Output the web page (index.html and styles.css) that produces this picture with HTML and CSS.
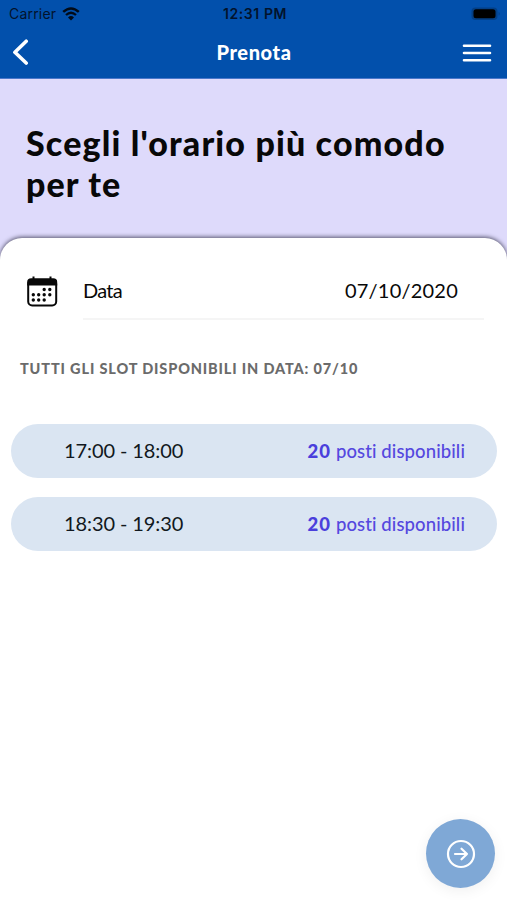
FILE: index.html
```html
<!DOCTYPE html>
<html lang="it">
<head>
<meta charset="utf-8">
<meta name="viewport" content="width=device-width, initial-scale=1">
<title>Prenota</title>
<link rel="stylesheet" href="styles.css">
</head>
<body>
<div class="screen">
  <header class="topbar">
    <div class="status">
      <div class="carrier"><span>Carrier</span>
        <svg width="18" height="14" viewBox="0 0 18 14" fill="none" stroke="#020b18"><path d="M1.2 4.9Q9-2 16.8 4.9" stroke-width="2.5"/><path d="M4 8Q9 3.5 14 8" stroke-width="2.3"/><path d="M9 13.5 6 10.4Q9 7.8 12 10.4Z" fill="#020b18" stroke="none"/></svg>
      </div>
      <span class="clock">12:31 PM</span>
      <svg class="battery" width="30" height="14" viewBox="0 0 30 14"><rect x=".5" y=".5" width="26" height="12.5" rx="4" fill="#033f86"/><rect x="2.5" y="2.3" width="22" height="9" rx="2.5" fill="#000"/><path d="M27.7 4.8q2 2 0 4z" fill="#033f86"/></svg>
    </div>
    <nav class="nav">
      <svg width="18" height="28" viewBox="0 0 18 28" fill="none" stroke="#fff" stroke-width="3.6" stroke-linecap="round" stroke-linejoin="round"><path d="M14.2 2.2 2.9 13.2l11.3 10.8"/></svg>
      <span class="nav-title">Prenota</span>
      <svg width="30" height="20" viewBox="0 0 30 20" stroke="#fff" stroke-width="2.6" stroke-linecap="round"><path d="M2 2.8h26M2 10h26M2 17.2h26"/></svg>
    </nav>
  </header>
  <section class="hero"><h1><span class="line-one">Scegli l'orario più comodo</span><br><span class="line-two">per te</span></h1></section>
  <main class="sheet">
    <div class="date-row">
      <svg width="32" height="32" viewBox="0 0 32 32"><rect x="2.2" y="4" width="28" height="25.4" rx="4" fill="none" stroke="#080808" stroke-width="2"/><path d="M1.2 9.5V6q0-3.7 4-3.7h22q4 0 4 3.7v3.5zM6.5.5h2v4h-2zM23.5.5h2v4h-2z" fill="#080808"/><path d="M18.2 13.5h0M23.8 13.5h0M7.3 18.7h0M12.7 18.7h0M18.2 18.7h0M23.8 18.7h0M7.3 24h0M12.7 24h0M18.2 24h0" stroke="#080808" stroke-width="3.4" stroke-linecap="round"/></svg>
      <div class="date-field"><span class="date-label">Data</span><span class="date-value">07/10/2020</span></div>
    </div>
    <h2><span class="caption">TUTTI GLI SLOT DISPONIBILI IN DATA: 07/10</span></h2>
    <div class="slots">
      <div class="slot"><span class="time">17:00 - 18:00</span><span class="seats"><b>20</b> posti disponibili</span></div>
      <div class="slot"><span class="time">18:30 - 19:30</span><span class="seats"><b>20</b> posti disponibili</span></div>
    </div>
    <div class="next">
      <svg width="30" height="30" viewBox="0 0 30 30" fill="none" stroke="#fff" stroke-width="2.2" stroke-linecap="round" stroke-linejoin="round"><circle cx="15" cy="15" r="13"/><path d="M9 15h12M15.5 9.7 21 15l-5.5 5.3"/></svg>
    </div>
  </main>
</div>
</body>
</html>
```
FILE: styles.css
```css
* { box-sizing: border-box; }
body { margin: 0; font-family: Lato, sans-serif; color: #080808; background: #fff; }
svg { display: block; flex: none; }
.screen { height: 900px; display: flex; flex-direction: column; background: #dedafb; overflow: hidden; }
.topbar { height: 79px; flex: none; background: #0250ac; border-bottom: 1px solid #4b78cb; }
.status { height: 27px; display: grid; grid-template-columns: 1fr auto 1fr; align-items: center; padding: 0 6px 0 9px; font-family: Inter, sans-serif; font-size: 14px; color: #02132c; }
.carrier { display: flex; align-items: center; gap: 6px; letter-spacing: .2px; }
.clock { font-weight: 600; letter-spacing: .6px; }
.battery { justify-self: end; }
.nav { height: 51px; display: flex; align-items: center; justify-content: space-between; padding: 0 15px 0 12px; }
.nav-title { font-size: 20px; line-height: 24px; font-weight: 900; letter-spacing: .6px; color: #fff; margin: 0 0 2px 16px; }
.hero { height: 159px; flex: none; padding: 43px 26px 0; }
h1 { margin: 0; font-size: 34px; line-height: 41px; font-weight: 900; white-space: nowrap; }
.line-one { letter-spacing: 1.16px; }
.line-two { letter-spacing: 1.1px; }
.sheet { flex: 1; display: flex; flex-direction: column; background: #fff; border-radius: 22px 22px 0 0; box-shadow: 0 -1px 4px #55536c; padding: 0 10px 0 11px; }
.date-row { display: flex; align-items: center; height: 82px; padding: 25px 13px 0 15px; gap: 25px; }
.date-field { flex: 1; height: 57px; display: flex; align-items: center; justify-content: space-between; border-bottom: 2px solid #f5f5f5; padding: 0 26px 2px 0; font-size: 20px; }
.date-label { letter-spacing: -.7px; }
.date-value { letter-spacing: .22px; }
h2 { margin: 38px 0 0; padding-left: 9px; font-size: 14.5px; line-height: 22px; font-weight: 900; color: #6b6b6b; white-space: nowrap; }
.caption { letter-spacing: .86px; }
.slots { display: flex; flex-direction: column; gap: 19px; margin-top: 44px; }
.slot { height: 54px; border-radius: 27px; background: #dae5f2; display: flex; align-items: center; justify-content: space-between; padding: 0 32px 2px 53px; }
.time { font-size: 20px; letter-spacing: -.1px; color: #111820; }
.seats { font-size: 18.5px; letter-spacing: .1px; color: #5548df; font-weight: 500; padding-top: 1px; }
.seats b { font-weight: 900; letter-spacing: 1.1px; color: #4a3fdc; }
.next { width: 69px; height: 69px; border-radius: 50%; background: #7fa8d6; display: flex; align-items: center; justify-content: center; margin: auto 2px 12px auto; box-shadow: 0 3px 14px #00000010; }
```
